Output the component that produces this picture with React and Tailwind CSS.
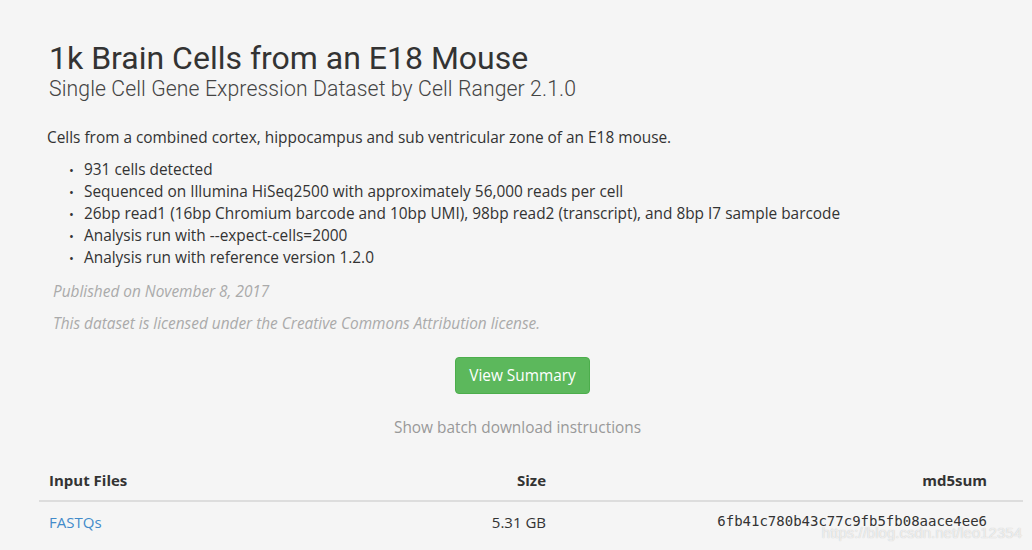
import React from "react";

const details = [
    "931 cells detected",
    "Sequenced on Illumina HiSeq2500 with approximately 56,000 reads per cell",
    "26bp read1 (16bp Chromium barcode and 10bp UMI), 98bp read2 (transcript), and 8bp I7 sample barcode",
    "Analysis run with --expect-cells=2000",
    "Analysis run with reference version 1.2.0",
];

const App = () => {
    return (
        <div className="relative min-h-[550px] w-full overflow-hidden bg-[#f5f5f5] font-['Open_Sans',sans-serif] text-[#333]">
            <div className="pl-[39px] pr-[9px]">
                <div className="px-[10px] pt-[40px]">
                    <h1 className="font-['Roboto',sans-serif] text-[32px] leading-[36px] text-[#333]">
                        1k Brain Cells from an E18 Mouse
                    </h1>
                    <h2 className="font-['Roboto',sans-serif] font-light text-[21.2px] leading-[26px] text-[#444] tracking-[0.1px]">
                        Single Cell Gene Expression Dataset by Cell Ranger 2.1.0
                    </h2>
                </div>

                <p className="mt-[25px] pl-[8px] text-[15.4px] leading-[22px]">
                    Cells from a combined cortex, hippocampus and sub ventricular zone of an E18 mouse.
                </p>

                <ul className="mt-[10px] pl-[30px] text-[15.4px] leading-[22px]">
                    {details.map((item) => (
                        <li key={item} className="flex">
                            <span className="mr-[9px] w-[6px] text-[13px]">•</span>
                            <span>{item}</span>
                        </li>
                    ))}
                </ul>

                <p className="mt-[13px] pl-[14px] text-[15.4px] italic leading-[20px] text-[#aaa]">
                    Published on November 8, 2017
                </p>
                <p className="mt-[12px] pl-[14px] text-[15.4px] italic leading-[20px] text-[#aaa]">
                    This dataset is licensed under the Creative Commons Attribution license.
                </p>

                <div className="mt-[23px] flex justify-center pr-[17px]">
                    <button className="h-[37px] w-[135px] rounded-[4px] border border-[#4cae4c] bg-[#5cb85c] text-[15.4px] text-white">
                        View Summary
                    </button>
                </div>

                <div className="mt-[24px] flex justify-center pr-[27px]">
                    <span className="text-[15.4px] leading-[20px] text-[#999]">Show batch download instructions</span>
                </div>

                <table className="mt-[31px] w-full text-[15px]">
                    <thead>
                        <tr className="border-b-2 border-[#ddd]">
                            <th className="px-[10px] pb-[8px] text-left font-bold">Input Files</th>
                            <th className="w-[200px] px-[10px] pb-[8px] text-right font-bold">Size</th>
                            <th className="w-[467px] px-[36px] pb-[8px] text-right font-bold">md5sum</th>
                        </tr>
                    </thead>
                    <tbody>
                        <tr>
                            <td className="px-[10px] pt-[9px] text-[#428bca]">FASTQs</td>
                            <td className="px-[10px] pt-[9px] text-right">5.31 GB</td>
                            <td className="px-[36px] pt-[9px] text-right font-['DejaVu_Sans_Mono',monospace] text-[14px]">
                                6fb41c780b43c77c9fb5fb08aace4ee6
                            </td>
                        </tr>
                    </tbody>
                </table>
            </div>

            <span className="absolute right-[10px] top-[522px] font-['Liberation_Sans',sans-serif] text-[15px] text-white/70 [text-shadow:0_0_1px_#bbb]">
                https://blog.csdn.net/leo12354
            </span>
        </div>
    );
};

export default App;
